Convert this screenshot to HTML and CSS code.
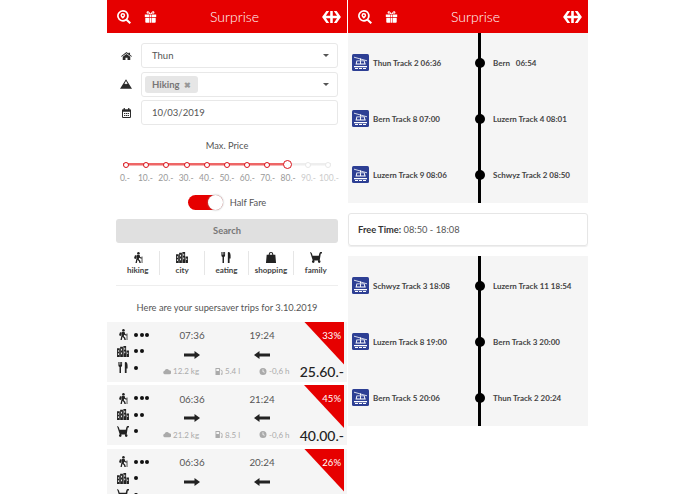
FILE: index.html
```html
<!DOCTYPE html>
<html lang="en">
  <head>
    <meta charset="UTF-8" />
    <meta name="viewport" content="width=device-width, initial-scale=1.0" />
    <title>Surprise</title>
    <link rel="stylesheet" href="styles.css">
  </head>
  <body>
    <svg class="sprite" aria-hidden="true">
      <symbol id="i-search" viewBox="0 0 18 18"><path fill-rule="evenodd" d="M7.500 0a7.500 7.500 0 0 1 6 12l4.500 4.200-1.800 1.800-4.500-4.200A7.500 7.500 0 1 1 7.500 0zm0 2.200a5.300 5.300 0 1 0 0 10.600 5.300 5.300 0 0 0 0-10.600zM7.500 3.800a3 3 0 0 1 3 3c0 2-1.800 3-3 4.600-1.200-1.600-3-2.600-3-4.600a3 3 0 0 1 3-3zm0 2a1.100 1.100 0 1 0 0 2.200 1.100 1.100 0 0 0 0-2.200z"/></symbol>
      <symbol id="i-gift" viewBox="0 0 16 14"><path fill-rule="evenodd" d="M1 4h5.600V7H1zM9.400 4H15V7H9.400zM7.200 4h1.600v3H7.200zM1.600 8h5v6h-4a1 1 0 0 1-1-1zM9.400 8h5v5a1 1 0 0 1-1 1h-4zM7.200 8h1.600v6H7.200zM8 3.400C6.600 3.400 3.400 3.600 3.200 1.800 3 .3 4.800-.4 6 .4 7 1 7.600 2 8 3c.4-1 1-2 2-2.600 1.200-.8 3-.1 2.800 1.400-.2 1.800-3.400 1.600-4.800 1.600zM5 1.400c-.6 0-.9.6-.4 1 .4.3 1.300.3 2 .3C6.300 2.300 5.700 1.400 5 1.400zM11 1.400c-.7 0-1.300.9-1.600 1.300.7 0 1.600 0 2-.3.5-.4.2-1-.4-1z"/></symbol>
      <symbol id="i-sbb" viewBox="0 0 22 14"><path d="M0 7 5 0h3.300L4.500 5.500h5V0h3v5.500h5L13.700 0H17l5 7-5 7h-3.300l3.800-5.500h-5V14h-3V8.500h-5L8.300 14H5z"/></symbol>
      <symbol id="i-home" viewBox="0 0 14 10"><path d="M7 0 9.500 1.900V.8h2v2.600L14 5.300l-.8.8L7 1.500.8 6.100 0 5.300zM2.200 6 7 2.500 11.800 6v4H8.300V7.300H5.700V10H2.200z"/></symbol>
      <symbol id="i-mountain" viewBox="0 0 14 11"><path d="M7 0 14 11H0zM7 2 5.200 4.800l1 .9L7 4.900l.8.800 1-.9z"/></symbol>
      <symbol id="i-calendar" viewBox="0 0 11 12"><path fill-rule="evenodd" d="M2 0h1.500v1.500h4V0H9v1.500h1a1 1 0 0 1 1 1V11a1 1 0 0 1-1 1H1a1 1 0 0 1-1-1V2.500a1 1 0 0 1 1-1h1zM1.200 4.500V10.800h8.600V4.500zM2.500 6h1.500v1.300H2.500zM4.800 6h1.500v1.300H4.800zM7 6h1.500v1.300H7zM2.500 8.300h1.500v1.300H2.500zM4.800 8.300h1.500v1.300H4.800zM7 8.300h1.500v1.300H7z"/></symbol>
      <symbol id="i-hike" viewBox="0 0 12 13"><circle cx="6.500" cy="1.500" r="1.500"/><path d="M4.800 3.300h3l.8 2.500 1.800 1-.6 1.100-2.400-1.200-.5 1.800 1.800 1.800.7 2.700H7.700l-.6-2.200-1.700-1.500L4.600 13H3l1.200-5.400zM4 3.500l.3 1.800-.8 2.900-2.200-.8 1-3.400zM10.300 5.200h.9V13h-.9z"/></symbol>
      <symbol id="i-city" viewBox="0 0 13 12"><path fill-rule="evenodd" d="M0 2.500h3V12H0zM3.400 .8h3V12h-3zM6.900 0h3v12h-3zM10.300 5H13v7h-2.700zM1 4.500v1.800h1V4.500zM1 8v1.800h1V8zM4.400 3v2h1V3zM4.400 7v2h1V7zM7.900 2v2h1V2zM7.900 6v2h1V6zM11.200 7v1.800h.9V7z"/></symbol>
      <symbol id="i-food" viewBox="0 0 10 12"><path d="M0 0h1v3h.5V0h1v3H3V0h1v3.800c0 .9-.6 1.400-1.200 1.600V12H1.200V5.400C.6 5.200 0 4.700 0 3.800zM8 0c1.200 0 2 1.500 2 4v3H8.900v5H7V1C7 .4 7.500 0 8 0z"/></symbol>
      <symbol id="i-bag" viewBox="0 0 11 12"><path fill-rule="evenodd" d="M3 3V2.500a2.500 2.500 0 0 1 5 0V3h2.200l.8 9H0l.8-9zm1.200 0h2.600v-.5a1.300 1.300 0 0 0-2.600 0z"/></symbol>
      <symbol id="i-family" viewBox="0 0 13 12"><path d="M0 0c1.200.2 2 1 2.200 2.200L2.800 4h6.700l.8-2.800C10.500.5 11.100 0 12 0h1v1.500h-.8c-.3 0-.4.1-.5.400L10.500 9.200H3zM3.500 9a1.400 1.400 0 1 1 0 2.900 1.400 1.400 0 0 1 0-2.900zM10 9a1.400 1.400 0 1 1 0 2.900A1.400 1.400 0 0 1 10 9z"/></symbol>
      <symbol id="i-arrow" viewBox="0 0 16 8"><path d="M0 2.500h10.500V0L16 4l-5.500 4V5.500H0z"/></symbol>
      <symbol id="i-arrow-back" viewBox="0 0 16 8"><path d="M16 2.500H5.500V0L0 4l5.500 4V5.500H16z"/></symbol>
      <symbol id="i-cloud" viewBox="0 0 10 7"><path d="M2.500 7A2.300 2.300 0 0 1 2 2.500a3 3 0 0 1 5.500-.5A2.500 2.500 0 0 1 8 7z"/></symbol>
      <symbol id="i-fuel" viewBox="0 0 9 8"><path fill-rule="evenodd" d="M.5 0h5v8h-5zM1.500 1v2.500h3V1zM6.200 1.500 8.500 3v4a1 1 0 0 1-1.800.4V6.200h.9V3.500L6.200 2.500z"/></symbol>
      <symbol id="i-clock" viewBox="0 0 8 8"><path fill-rule="evenodd" d="M4 0a4 4 0 1 1 0 8 4 4 0 0 1 0-8zM3.500 1.500V4.300l2 1.200.5-.8-1.600-.9V1.500z"/></symbol>
      <symbol id="i-gondola" viewBox="0 0 17 17"><rect width="17" height="17" rx="1.500" fill="#2d3f94"/><path d="M2 3.200 15 6.800" stroke="#fff" stroke-width=".8"/><path d="M8 4.500h1v2H8z" fill="#fff"/><path fill-rule="evenodd" d="M4.500 6.500h8l1.300 4H3.500zM5.300 7.300 4.700 9.500h3.400V7.300zM9 7.300v2.200h3.400l-.6-2.200z" fill="#fff"/><path d="M2 12h13v1.200H2zM3 14h3v1H3zM7 14h3v1H7zM11 14h3v1h-3z" fill="#fff"/></symbol>
    </svg>

    <div class="screens">
      <section class="screen">
        <header class="topbar">
          <div class="topbar-icons">
            <svg class="icon-search"><use href="#i-search" /></svg>
            <svg class="icon-gift"><use href="#i-gift" /></svg>
          </div>
          <h1>Surprise</h1>
          <svg class="icon-sbb"><use href="#i-sbb" /></svg>
        </header>

        <form class="search-form">
          <div class="field">
            <svg class="field-icon home"><use href="#i-home" /></svg>
            <div class="control select">Thun<span class="caret"></span></div>
          </div>
          <div class="field">
            <svg class="field-icon mountain"><use href="#i-mountain" /></svg>
            <div class="control select tags"><span class="tag">Hiking <b>&#10006;</b></span><span class="caret"></span></div>
          </div>
          <div class="field">
            <svg class="field-icon calendar"><use href="#i-calendar" /></svg>
            <div class="control">10/03/2019</div>
          </div>

          <p class="price-title">Max. Price</p>
          <div class="slider">
            <i></i><i></i><i></i><i></i><i></i><i></i><i></i><i></i><i class="handle"></i><i class="off"></i><i class="off"></i>
          </div>
          <div class="slider-labels">
            <span>0.-</span><span>10.-</span><span>20.-</span><span>30.-</span><span>40.-</span><span>50.-</span><span>60.-</span><span>70.-</span><span>80.-</span><span class="off">90.-</span><span class="off">100.-</span>
          </div>

          <div class="half-fare">
            <span class="toggle"><span class="knob"></span></span>
            <span>Half Fare</span>
          </div>
          <div class="search-btn">Search</div>

          <div class="cats">
            <div class="cat"><svg><use href="#i-hike" /></svg>hiking</div>
            <div class="cat"><svg><use href="#i-city" /></svg>city</div>
            <div class="cat"><svg><use href="#i-food" /></svg>eating</div>
            <div class="cat"><svg><use href="#i-bag" /></svg>shopping</div>
            <div class="cat"><svg><use href="#i-family" /></svg>family</div>
          </div>
        </form>

        <p class="trips-title">Here are your supersaver trips for 3.10.2019</p>

        <div class="trip">
          <div class="activities">
            <div><svg><use href="#i-hike" /></svg><span class="dots"><i></i><i></i><i></i></span></div>
            <div><svg><use href="#i-city" /></svg><span class="dots"><i></i><i></i></span></div>
            <div><svg><use href="#i-food" /></svg><span class="dots"><i></i></span></div>
          </div>
          <div class="time">07:36</div>
          <div class="time">19:24</div>
          <svg class="arrow go"><use href="#i-arrow" /></svg>
          <svg class="arrow back"><use href="#i-arrow-back" /></svg>
          <div class="stats">
            <span class="co2"><svg><use href="#i-cloud" /></svg>12.2 kg</span>
            <span class="fuel"><svg><use href="#i-fuel" /></svg>5.4 l</span>
            <span><svg><use href="#i-clock" /></svg>-0,6 h</span>
          </div>
          <div class="price">25.60.-</div>
          <div class="discount"><span>33%</span></div>
        </div>

        <div class="trip">
          <div class="activities">
            <div><svg><use href="#i-hike" /></svg><span class="dots"><i></i><i></i><i></i></span></div>
            <div><svg><use href="#i-city" /></svg><span class="dots"><i></i><i></i></span></div>
            <div><svg><use href="#i-family" /></svg><span class="dots"><i></i></span></div>
          </div>
          <div class="time">06:36</div>
          <div class="time">21:24</div>
          <svg class="arrow go"><use href="#i-arrow" /></svg>
          <svg class="arrow back"><use href="#i-arrow-back" /></svg>
          <div class="stats">
            <span class="co2"><svg><use href="#i-cloud" /></svg>21.2 kg</span>
            <span class="fuel"><svg><use href="#i-fuel" /></svg>8.5 l</span>
            <span><svg><use href="#i-clock" /></svg>-0,6 h</span>
          </div>
          <div class="price">40.00.-</div>
          <div class="discount"><span>45%</span></div>
        </div>

        <div class="trip">
          <div class="activities">
            <div><svg><use href="#i-hike" /></svg><span class="dots"><i></i><i></i><i></i></span></div>
            <div><svg><use href="#i-city" /></svg><span class="dots"><i></i></span></div>
            <div><svg><use href="#i-family" /></svg><span class="dots"><i></i></span></div>
          </div>
          <div class="time">06:36</div>
          <div class="time">20:24</div>
          <svg class="arrow go"><use href="#i-arrow" /></svg>
          <svg class="arrow back"><use href="#i-arrow-back" /></svg>
          <div class="discount"><span>26%</span></div>
        </div>
      </section>

      <section class="screen">
        <header class="topbar">
          <div class="topbar-icons">
            <svg class="icon-search"><use href="#i-search" /></svg>
            <svg class="icon-gift"><use href="#i-gift" /></svg>
          </div>
          <h1>Surprise</h1>
          <svg class="icon-sbb"><use href="#i-sbb" /></svg>
        </header>

        <div class="timeline">
          <div class="stop"><svg><use href="#i-gondola" /></svg><span>Thun Track 2 06:36</span><i></i><span>Bern&nbsp;&nbsp; 06:54</span></div>
          <div class="stop"><svg><use href="#i-gondola" /></svg><span>Bern Track 8 07:00</span><i></i><span>Luzern Track 4 08:01</span></div>
          <div class="stop"><svg><use href="#i-gondola" /></svg><span>Luzern Track 9 08:06</span><i></i><span>Schwyz Track 2 08:50</span></div>
        </div>

        <div class="free-time"><b>Free Time:</b> 08:50 - 18:08</div>

        <div class="timeline">
          <div class="stop"><svg><use href="#i-gondola" /></svg><span>Schwyz Track 3 18:08</span><i></i><span>Luzern Track 11 18:54</span></div>
          <div class="stop"><svg><use href="#i-gondola" /></svg><span>Luzern Track 8 19:00</span><i></i><span>Bern Track 3 20:00</span></div>
          <div class="stop"><svg><use href="#i-gondola" /></svg><span>Bern Track 5 20:06</span><i></i><span>Thun Track 2 20:24</span></div>
        </div>
      </section>
    </div>
  </body>
</html>
```

FILE: styles.css
```css
* {
  margin: 0;
  padding: 0;
  box-sizing: border-box;
}
html,
body {
  height: 100%;
  overflow: hidden;
}
body {
  background: #fff;
  color: #444;
  font-family: Lato, "Open Sans", sans-serif;
  font-size: 9.3px;
}
.sprite {
  display: none;
}
svg {
  fill: currentColor;
  display: block;
}
.screens {
  display: flex;
  gap: 1px;
  padding-left: 107px;
}
.screen {
  width: 240px;
}

/* top bar */
.topbar {
  height: 33px;
  background: #e60000;
  color: #fff;
  display: grid;
  grid-template-columns: 103px auto 1fr;
  align-items: center;
}
.topbar h1 {
  font-size: 14px;
  font-weight: 300;
}
.topbar-icons {
  display: flex;
  align-items: center;
  gap: 13px;
  padding-left: 10px;
}
.icon-search {
  width: 14px;
  height: 14px;
}
.icon-gift {
  width: 13px;
  height: 12px;
}
.icon-sbb {
  width: 21px;
  height: 12px;
  justify-self: end;
  margin-right: 5px;
}

/* form */
.search-form {
  padding: 10px 9px 0;
}
.field {
  display: grid;
  grid-template-columns: 25px 1fr;
  align-items: center;
  margin-bottom: 3.5px;
}
.field-icon {
  justify-self: center;
  margin-right: 5px;
  color: #2a2a2a;
}
.field-icon.home {
  width: 11px;
  height: 8px;
}
.field-icon.mountain {
  width: 12px;
  height: 10px;
}
.field-icon.calendar {
  width: 9px;
  height: 10px;
}
.control {
  height: 25px;
  border: 1px solid #e8e8e8;
  border-radius: 3px;
  padding-left: 10px;
  color: #555;
  font-size: 9.5px;
  line-height: 23px;
}
.select {
  display: flex;
  align-items: center;
  justify-content: space-between;
  padding-right: 8px;
}
.tags {
  padding-left: 3px;
}
.caret {
  border: 3px solid transparent;
  border-top: 3px solid #555;
  border-bottom: 0;
}
.tag {
  background: #e6e6e6;
  border-radius: 3px;
  height: 17px;
  line-height: 17px;
  padding: 0 7px;
  color: #777;
  font-weight: 700;
  font-size: 9.5px;
}
.tag b {
  font-size: 8px;
  margin-left: 2px;
  color: #999;
}
.price-title {
  text-align: center;
  margin-top: 14px;
  line-height: 13px;
  color: #555;
}
.slider {
  margin: 8px 6.8px 0;
  height: 9px;
  display: flex;
  align-items: center;
  justify-content: space-between;
  background: linear-gradient(to right, #e66 80%, #eee 80%) center / 100% 2.5px no-repeat;
}
.slider i {
  width: 6px;
  height: 6px;
  border-radius: 50%;
  background: #fff;
  border: 1.8px solid #d8141c;
}
.slider i.handle {
  width: 9px;
  height: 9px;
  margin: 0 -1.5px;
}
.slider i.off {
  border-color: #e8e8e8;
}
.slider-labels {
  margin: 4px -1px 0;
  display: flex;
  justify-content: space-between;
  font-size: 8.5px;
  color: #999;
  line-height: 11px;
}
.slider-labels span {
  width: 20px;
  white-space: nowrap;
  display: flex;
  justify-content: center;
}
.slider-labels .off {
  color: #ccc;
}
.half-fare {
  display: flex;
  align-items: center;
  justify-content: center;
  gap: 7px;
  margin-top: 10.5px;
  height: 16px;
  color: #555;
}
.toggle {
  width: 35px;
  height: 15px;
  background: #e60000;
  border-radius: 8px;
  display: flex;
  justify-content: flex-end;
}
.knob {
  width: 15px;
  height: 15px;
  border-radius: 50%;
  background: #fff;
  box-shadow: 0 0 2px #999;
}
.search-btn {
  margin-top: 8.5px;
  height: 24px;
  background: #e0e0e0;
  border-radius: 3px;
  text-align: center;
  line-height: 24px;
  color: #777;
  font-weight: 700;
}
.cats {
  display: grid;
  grid-template-columns: repeat(5, 1fr);
  margin-top: 8px;
  padding-bottom: 10px;
  border-bottom: 1px solid #eee;
}
.cat {
  height: 24px;
  display: flex;
  flex-direction: column;
  align-items: center;
  justify-content: space-between;
  border-right: 1px solid #e6e6e6;
  font-size: 8px;
  font-weight: 700;
  color: #444;
  line-height: 10px;
}
.cat:last-child {
  border-right: 0;
}
.cat svg {
  width: 12px;
  height: 11px;
  margin-top: 1px;
  color: #222;
}
.trips-title {
  text-align: center;
  color: #555;
  margin-top: 15px;
  margin-bottom: 7.5px;
  line-height: 13px;
}

/* trip cards */
.trip {
  position: relative;
  height: 60px;
  margin-bottom: 3.5px;
  background: #f5f5f5;
  display: grid;
  grid-template-columns: 50px 70px 70px 50px;
  grid-template-rows: 27px 12px 21px;
  align-items: center;
  justify-items: center;
}
.activities {
  grid-row: 1 / 4;
  justify-self: stretch;
  align-self: start;
  padding: 5px 0 0 10px;
}
.activities div {
  height: 16.5px;
  display: grid;
  grid-template-columns: 17px auto;
  align-items: center;
}
.activities svg {
  width: 12px;
  height: 11px;
  color: #222;
}
.dots {
  display: flex;
  gap: 1.5px;
}
.dots i {
  width: 4px;
  height: 4px;
  border-radius: 50%;
  background: #111;
}
.time {
  color: #555;
  font-size: 9.8px;
}
.arrow {
  width: 16px;
  height: 8px;
  color: #222;
  grid-row: 2;
}
.arrow.go {
  grid-column: 2;
}
.arrow.back {
  grid-column: 3;
}
.stats {
  grid-column: 2 / 4;
  justify-self: stretch;
  display: flex;
  padding-left: 6px;
  font-size: 8px;
  color: #aaa;
}
.stats span {
  display: flex;
  align-items: center;
  gap: 2px;
}
.stats svg {
  width: 8px;
  height: 7px;
}
.stats .co2 {
  width: 52px;
}
.stats .fuel {
  width: 44px;
}
.price {
  justify-self: end;
  padding: 2px 3px 0 0;
  font-size: 14px;
  font-weight: 500;
  color: #222;
  white-space: nowrap;
  line-height: 20px;
}
.discount {
  position: absolute;
  top: 0;
  right: 3px;
  width: 40px;
  height: 43px;
  background: #e60000;
  clip-path: polygon(0 0, 100% 0, 100% 100%);
  color: #fff;
  font-size: 9.5px;
  text-align: right;
  padding: 8px 3px 0 0;
}

/* timeline */
.timeline {
  height: 170px;
  padding-top: 1.5px;
  background: #f5f5f5 linear-gradient(#000, #000) 130px 0 / 3px 100% no-repeat;
  display: grid;
  grid-template-rows: repeat(3, 1fr);
}
.stop {
  display: grid;
  grid-template-columns: 17px 106px 10px 1fr;
  align-items: center;
  padding-left: 4px;
  font-size: 8px;
  font-weight: 700;
  color: #444;
  white-space: nowrap;
}
.stop svg {
  width: 17px;
  height: 17px;
}
.stop span:first-of-type {
  padding-left: 4px;
}
.stop span:last-child {
  padding-left: 8px;
}
.stop i {
  width: 10px;
  height: 10px;
  border-radius: 50%;
  background: #000;
}
.free-time {
  height: 33px;
  margin: 10px 0;
  padding-left: 9px;
  border: 1px solid #e6e6e6;
  border-radius: 3px;
  line-height: 31px;
  color: #555;
  box-shadow: 0 1px 1px #eee;
}
.free-time b {
  color: #333;
}
```
